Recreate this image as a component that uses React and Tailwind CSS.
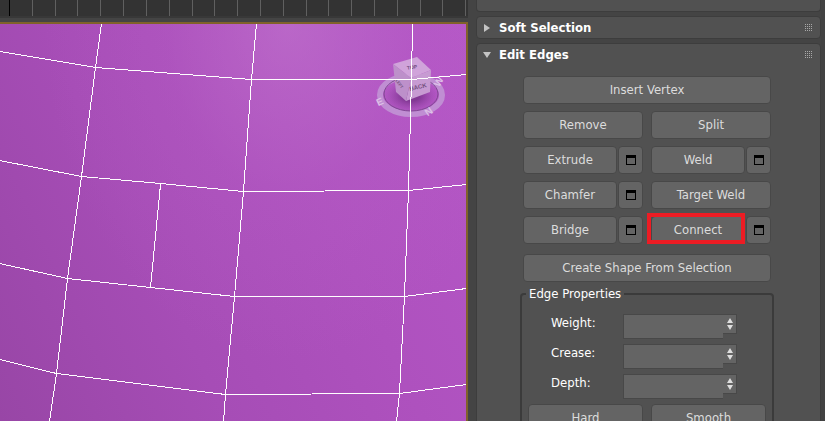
import React from "react";

const ticks = [32, 55, 77, 100, 123, 146, 169, 192, 214, 237, 260, 283, 306, 328, 351, 374, 397, 420, 442, 465];

const meshLines = [
  "101,-1 95,43 81,152 67,254 56,349 49,397",
  "256,-1 251,55 243,167 234,272 225,370 223,397",
  "412,-1 411,55 408,166 404,271 399,369 396,397",
  "160,160 150,263",
  "-1,27 95,43 251,55 411,55 466,50",
  "-1,136 81,152 160,159 243,167 408,166 466,160",
  "-1,239 67,254 150,263 234,272 404,272 466,264",
  "-1,335 56,349 225,370 399,369 466,360",
];

const buttonStyle =
  "flex h-7 min-w-0 items-center justify-center rounded-[4px] border border-[#484848] bg-[#646464] text-[13px] leading-4 text-[#dcdcdc]";

function Button({ children, className = "flex-1" }) {
  return (
    <button type="button" className={`${buttonStyle} ${className}`}>
      {children}
    </button>
  );
}

function SettingsButton({ label }) {
  return (
    <button type="button" aria-label={label} className={`${buttonStyle} w-[25px] shrink-0`}>
      <svg width="10" height="10" viewBox="0 0 10 10" shapeRendering="crispEdges" aria-hidden="true">
        <path d="M0 0H10V10H0ZM1 3V9H9V3Z" fill="#000" fillRule="evenodd" />
      </svg>
    </button>
  );
}

function Command({ name, settings, highlighted }) {
  return (
    <div className="flex gap-px">
      <div className="relative flex flex-1">
        <Button>{name}</Button>
        {highlighted && <span className="pointer-events-none absolute -top-[3px] right-0 bottom-0 -left-1 border-4 border-[#ed1c24]" />}
      </div>
      {settings && <SettingsButton label={`${name} settings`} />}
    </div>
  );
}

function Grip() {
  return (
    <svg width="8" height="8" viewBox="0 0 8 8" shapeRendering="crispEdges" aria-hidden="true">
      {[0, 2, 4, 6].map((y) =>
        [0, 2, 4, 6].map((x) => <rect key={`${x}-${y}`} x={x} y={y} width="1" height="1" fill="#a8a8a8" />)
      )}
    </svg>
  );
}

function RolloutHeader({ title, open }) {
  return (
    <h2 className="h-[21px]">
      <button type="button" aria-expanded={open} className="flex h-full w-full items-center pr-[7px] pl-[6px] text-left text-[13px] leading-4 font-bold text-white">
        <svg width="8" height="8" viewBox="0 0 8 8" className="mr-2 shrink-0" aria-hidden="true">
          <path d={open ? "M0 1H8L4 7Z" : "M1 0L7 4L1 8Z"} fill="#c4c4c4" />
        </svg>
        <span className="flex-1">{title}</span>
        <Grip />
      </button>
    </h2>
  );
}

function Spinner({ label }) {
  const id = label.toLowerCase();
  return (
    <div className="flex h-[30px] items-start">
      <label htmlFor={id} className="w-[72px] shrink-0 pt-px text-[13px] leading-4 text-white">
        {label}:
      </label>
      <div className="flex min-w-0 flex-1 items-start">
        <input id={id} type="text" className="h-[25px] min-w-0 flex-1 border border-r-0 border-[#484848] bg-[#646464] px-1 text-[13px] text-white outline-none" />
        <span className="flex h-5 w-[14px] shrink-0 items-center justify-center border border-l-0 border-[#484848] bg-[#646464]">
          <svg width="6" height="12" viewBox="0 0 6 12" aria-hidden="true">
            <path d="M3 0L6 5H0ZM0 7H6L3 12Z" fill="#dedede" />
          </svg>
        </span>
      </div>
    </div>
  );
}

function ViewCube() {
  return (
    <svg width="76" height="68" viewBox="-2 0 76 68" className="absolute top-[31px] right-4" role="img" aria-label="View cube">
      <defs>
        <radialGradient id="cubeShadow">
          <stop offset="0.3" stopColor="#7d358f" stopOpacity="0.9" />
          <stop offset="1" stopColor="#9a46ac" stopOpacity="0" />
        </radialGradient>
      </defs>
      <ellipse cx="35" cy="41" rx="28" ry="17" fill="url(#cubeShadow)" />
      <ellipse cx="35" cy="40" rx="31" ry="19" fill="none" stroke="#c08ed3" strokeWidth="6" />
      <ellipse cx="35" cy="39" rx="27" ry="17" fill="none" stroke="#7f4892" strokeWidth="1" />
      <path d="M17 9L41 2L55 15L35 23Z" fill="#d0a3da" />
      <path d="M17 9L35 23L30 46L20 37Z" fill="#bd90ca" />
      <path d="M35 23L55 15L54 37L30 46Z" fill="#c79bd2" />
      <g fill="#74507e" fontFamily="Liberation Sans, sans-serif" fontWeight="bold" textAnchor="middle">
        <text x="36" y="14" fontSize="5" transform="rotate(-8 36 12)">TOP</text>
        <text x="42" y="34" fontSize="6" transform="rotate(-14 42 32)">BACK</text>
        <text x="23" y="30" fontSize="4" transform="rotate(52 23 29)">LEFT</text>
      </g>
      <g fill="#dcbfe6" fontFamily="Liberation Sans, sans-serif" fontWeight="bold" fontSize="10" textAnchor="middle">
        <text x="4" y="50" transform="rotate(-25 4 47)">E</text>
        <text x="53" y="60" transform="rotate(-35 53 57)">N</text>
        <text x="63" y="30" transform="rotate(-60 63 27)">W</text>
      </g>
    </svg>
  );
}

function Viewport() {
  return (
    <main className="flex min-w-0 flex-1 flex-col">
      <div className="h-4 overflow-hidden bg-[#333]">
        <svg width="100%" height="16" viewBox="0 0 468 16" preserveAspectRatio="none" shapeRendering="crispEdges" role="img" aria-label="Time ruler">
          <rect x="9" width="1" height="16" fill="#000" />
          {ticks.map((x) => (
            <rect key={x} x={x} width="1" height="16" fill="#606060" />
          ))}
        </svg>
      </div>
      <div className="h-[6px] border-t-2 border-[#383838] bg-[#444]" />
      <div className="relative min-h-0 flex-1 overflow-hidden border-t-2 border-r-2 border-[#80622a] bg-[linear-gradient(65deg,#9846a6_0%,#a64db6_35%,#ae51be_65%,#b557c7_100%)]">
        <div className="absolute inset-0 bg-[radial-gradient(ellipse_at_62%_0%,#c47bd080_0%,#b862c840_30%,#a94aba00_60%)]" />
        <ViewCube />
        <svg className="absolute inset-0 h-full w-full" viewBox="0 0 466 397" preserveAspectRatio="none" shapeRendering="crispEdges" role="img" aria-label="Mesh edges">
          <g transform="translate(0.5 0.5)" fill="none" stroke="#fff" strokeWidth="1">
            {meshLines.map((points) => (
              <polyline key={points} points={points} vectorEffect="non-scaling-stroke" />
            ))}
          </g>
        </svg>
      </div>
    </main>
  );
}

export default function App() {
  return (
    <div className="flex h-screen overflow-hidden bg-[#444] font-['DejaVu_Sans_Condensed','DejaVu_Sans',sans-serif]">
      <Viewport />
      <aside className="flex w-[357px] shrink-0 flex-col gap-1 overflow-hidden border-r-4 border-[#424242] pl-2">
        <section className="h-3 shrink-0 rounded-b-[4px] border border-t-0 border-[#3d3d3d] bg-[#515151]" />
        <section className="shrink-0 rounded-[4px] border border-[#3d3d3d] bg-[#515151]">
          <RolloutHeader title="Soft Selection" open={false} />
        </section>
        <section className="shrink-0 rounded-[4px] border border-[#3d3d3d] bg-[#515151]">
          <RolloutHeader title="Edit Edges" open />
          <div className="mt-[11px] flex flex-col pr-[49px] pl-[46px]">
            <div className="flex">
              <Button>Insert Vertex</Button>
            </div>
            <div className="mt-[7px] grid grid-cols-2 gap-x-2 gap-y-[7px]">
              <Command name="Remove" />
              <Command name="Split" />
              <Command name="Extrude" settings />
              <Command name="Weld" settings />
              <Command name="Chamfer" settings />
              <Command name="Target Weld" />
              <Command name="Bridge" settings />
              <Command name="Connect" settings highlighted />
            </div>
            <div className="mt-[10px] flex">
              <Button>Create Shape From Selection</Button>
            </div>
            <fieldset className="-mx-[3px] mt-1 min-w-0 rounded-[4px] border-2 border-[#3b3b3b] px-1">
              <legend className="px-[3px] text-[13px] leading-4 text-white">Edge Properties</legend>
              <div className="mt-3 pr-[31px] pl-[25px]">
                <Spinner label="Weight" />
                <Spinner label="Crease" />
                <Spinner label="Depth" />
              </div>
              <div className="grid grid-cols-2 gap-x-2 pr-[2px] pl-[2px]">
                <Button>Hard</Button>
                <Button>Smooth</Button>
              </div>
            </fieldset>
          </div>
        </section>
      </aside>
    </div>
  );
}
